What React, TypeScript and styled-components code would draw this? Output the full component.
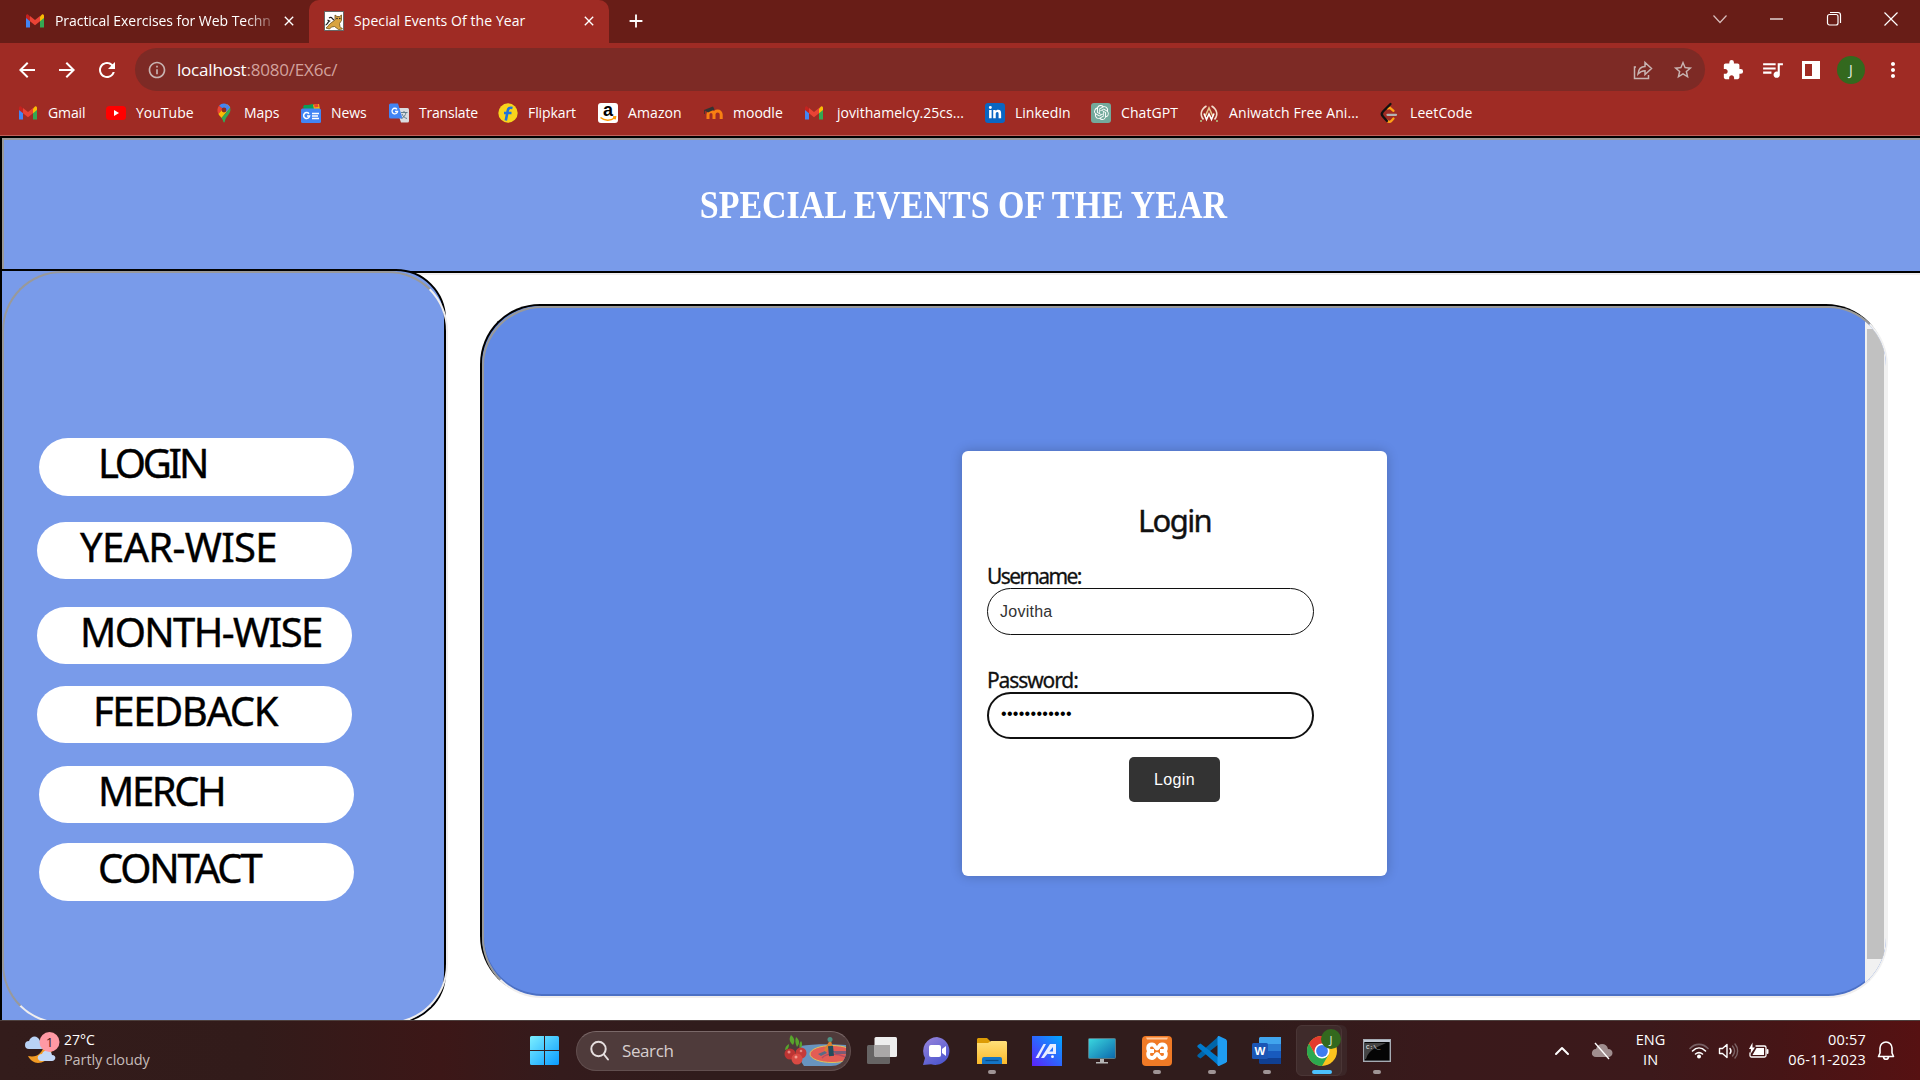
import React from "react";
import styled, { createGlobalStyle } from "styled-components";
import { MdExtension, MdQueueMusic, MdInfoOutline, MdStarBorder, MdMoreVert, MdArrowBack, MdArrowForward, MdRefresh, MdClose, MdAdd } from "react-icons/md";
import { SiOpenai } from "react-icons/si";
import { FaLinkedinIn } from "react-icons/fa";

const Global = createGlobalStyle`
  * { box-sizing: border-box; }
  body { margin: 0; background: #fff; overflow: hidden; }
`;

const ui = `"Open Sans", "Noto Sans", sans-serif`;
const body = `"Noto Sans", "Open Sans", sans-serif`;
const arial = `"Liberation Sans", Arial, sans-serif`;

const Screen = styled.div`
  width: 1920px;
  height: 1080px;
  display: flex;
  flex-direction: column;
  overflow: hidden;
  font-family: ${ui};
`;

/* ---------- browser chrome ---------- */

const TabStrip = styled.div`
  height: 43px;
  flex: none;
  background: #681d17;
  display: flex;
  align-items: stretch;
  color: #fff;
`;

const Tab = styled.div<{ $active?: boolean; $width: number; $inset: number }>`
  width: ${(p) => p.$width}px;
  padding: 0 12px 2px ${(p) => p.$inset}px;
  display: flex;
  align-items: center;
  background: ${(p) => (p.$active ? "#9f2b24" : "transparent")};
  border-radius: 10px 10px 0 0;
  font-size: 14px;
  svg { flex: none; }
`;

const TabTitle = styled.span<{ $gap: number; $spacing: number; $fade?: boolean }>`
  flex: 1;
  margin-left: ${(p) => p.$gap}px;
  overflow: hidden;
  white-space: nowrap;
  letter-spacing: ${(p) => p.$spacing}px;
  ${(p) => p.$fade && "mask-image: linear-gradient(90deg, #000 84%, transparent 100%);"}
`;

const NewTab = styled.div`
  display: flex;
  align-items: center;
  padding: 0 0 1px 16px;
`;

const WindowControls = styled.div`
  margin-left: auto;
  display: flex;
  height: 37px;
  align-items: center;
  padding-right: 17px;
  gap: 33px;
`;

const Toolbar = styled.div`
  height: 53px;
  flex: none;
  background: #9f2b24;
  display: flex;
  align-items: center;
  padding: 0 15px 0 15px;
  color: #fff;
`;

const NavButtons = styled.div`
  display: flex;
  gap: 16px;
  width: 120px;
`;

const Omnibox = styled.div`
  width: 1570px;
  height: 43px;
  border-radius: 22px;
  background: #7d2a25;
  display: flex;
  align-items: center;
  padding: 0 11px 0 12px;
  color: #c8b3b1;
`;

const Url = styled.span`
  flex: 1;
  margin-left: 10px;
  font-size: 17px;
  letter-spacing: -0.2px;
  color: #d3a29d;
  b { font-weight: 400; color: #fff; }
`;

const OmniActions = styled.div`
  display: flex;
  gap: 18px;
  align-items: center;
`;

const ToolActions = styled.div`
  display: flex;
  align-items: center;
  justify-content: space-between;
  flex: 1;
  margin: 0 0 0 17px;
`;

const Avatar = styled.div<{ $size: number; $font: number }>`
  width: ${(p) => p.$size}px;
  height: ${(p) => p.$size}px;
  border-radius: 50%;
  background: #33691e;
  color: #e6efe2;
  font-size: ${(p) => p.$font}px;
  display: flex;
  align-items: center;
  justify-content: center;
`;

const Bookmarks = styled.div`
  height: 40px;
  flex: none;
  background: #9f2b24;
  border-bottom: 1px solid #c0605a;
  display: flex;
  padding: 0 0 6px 18px;
  align-items: center;
  color: #fff;
  font-size: 14px;
`;

const Bookmark = styled.div<{ $width: number; $gap: number }>`
  width: ${(p) => p.$width}px;
  flex: none;
  display: flex;
  align-items: center;
  gap: ${(p) => p.$gap}px;
  white-space: nowrap;
  svg, i { flex: none; overflow: visible; }
`;

const BookmarkText = styled.span<{ $spacing: number }>`
  letter-spacing: ${(p) => p.$spacing}px;
`;

const Tile = styled.i<{ $bg: string; $color: string }>`
  width: 20px;
  height: 20px;
  border-radius: 3px;
  background: ${(p) => p.$bg};
  color: ${(p) => p.$color};
  display: flex;
  align-items: center;
  justify-content: center;
`;

/* ---------- web page ---------- */

const Page = styled.div`
  height: 884px;
  flex: none;
  overflow: hidden;
  background: #fff;
`;

const Banner = styled.header`
  height: 139px;
  background: #799bea;
  border: solid #000;
  border-width: 2px 0 0 2px;
  display: flex;
`;

const BannerInner = styled.div`
  flex: 1;
  border: 2px solid #999;
  border-right: 0;
  border-bottom-color: #f0eeee;
  display: flex;
  justify-content: center;
  background: #799bea;
  box-shadow: inset 0 -2px #000;
`;

const BannerTitle = styled.h1`
  margin: 0;
  padding: 41px 0 0 4px;
  font: 700 39px/48px "Liberation Serif", "Times New Roman", serif;
  color: #fff;
  white-space: nowrap;
  transform: scaleX(0.871);
`;

const Content = styled.div`
  display: flex;
  align-items: flex-start;
`;

const Sidebar = styled.nav`
  position: relative;
  width: 446px;
  height: 754px;
  flex: none;
  margin-top: -6px;
  background: #799bea;
  border: 2px solid #000;
  border-radius: 0 50px 50px 0;
  padding: 167px 0 0 35px;
  &::after {
    content: "";
    position: absolute;
    inset: 0 -4px -3px 0;
    border: 2px solid;
    border-color: #999 #f0eeee #f0eeee #999;
    border-radius: 60px;
  }
`;

const NavPill = styled.a<{ $h: number; $shift: number; $gap: number; $pad: number; $spacing: number }>`
  display: block;
  width: 315px;
  height: ${(p) => p.$h}px;
  margin: 0 0 ${(p) => p.$gap}px ${(p) => p.$shift}px;
  padding-left: ${(p) => p.$pad}px;
  border-radius: 29px;
  background: #fff;
  color: #000;
  font: 400 40px/49px ${body};
  letter-spacing: ${(p) => p.$spacing}px;
  -webkit-text-stroke: 0.4px #000;
  white-space: nowrap;
`;

const FrameOuter = styled.main`
  width: 1406px;
  height: 692px;
  margin: 29px 0 0 34px;
  flex: none;
  border: solid #000;
  border-width: 2px 0 0 2px;
  border-radius: 60px;
  background: #628ae6;
`;

const Frame = styled.div`
  width: 1406px;
  height: 692px;
  display: flex;
  border: 2px solid;
  border-color: #999 #f1f1f1 #f0eeee #999;
  border-radius: 60px;
  background: #628ae6;
  box-shadow: inset 0 -2px #4c70c4;
  overflow: hidden;
`;

const FrameBody = styled.div`
  flex: 1;
  padding: 143px 0 0 478px;
`;

const ScrollTrack = styled.div`
  width: 21px;
  background: #f1f1f1;
  padding: 21px 2px 0 2px;
`;

const ScrollThumb = styled.div`
  height: 630px;
  background: #c1c1c1;
`;

const Card = styled.form`
  width: 425px;
  height: 425px;
  border-radius: 6px;
  background: #fff;
  box-shadow: 0 0 12px rgba(0, 0, 0, 0.22);
  padding: 47px 25px 0;
  display: flex;
  flex-direction: column;
  color: #111;
`;

const CardTitle = styled.h2`
  margin: 0 0 23px;
  text-align: center;
  font: 400 31px/44px ${body};
  letter-spacing: -1.6px;
  -webkit-text-stroke: 0.4px #111;
`;

const FieldLabel = styled.label<{ $spacing: number }>`
  height: 23px;
  font: 400 21px/23px ${body};
  letter-spacing: ${(p) => p.$spacing}px;
  -webkit-text-stroke: 0.3px #111;
  color: #111;
`;

const Field = styled.div<{ $focus?: boolean; $gap: number }>`
  width: 327px;
  height: 47px;
  flex: none;
  margin-bottom: ${(p) => p.$gap}px;
  padding: 0 12px;
  border: ${(p) => (p.$focus ? 2 : 1)}px solid #101010;
  border-radius: 24px;
  font: 16px/45px ${arial};
  letter-spacing: 0.25px;
  color: #333;
`;

const Mask = styled.span`
  display: block;
  font: 16px/40px ${arial};
  letter-spacing: 0.3px;
  color: #000;
`;

const Submit = styled.button`
  width: 91px;
  height: 45px;
  align-self: center;
  border: 0;
  border-radius: 5px;
  background: #333;
  color: #fff;
  font: 16px ${arial};
  letter-spacing: 0.4px;
`;

/* ---------- taskbar ---------- */

const Taskbar = styled.footer`
  height: 60px;
  flex: none;
  border-top: 1px solid #4d403e;
  background: linear-gradient(90deg, #331c1b 0, #321b1a 250px, #3c1717 440px, #341b1c 560px, #301c1c 700px, #301c1c 1250px, #3a191b 1450px, #3c191b 1650px, #461516 1780px, #561112 1920px);
  display: flex;
  align-items: center;
  color: #fff;
`;

const Weather = styled.div`
  width: 530px;
  padding-left: 25px;
  display: flex;
  gap: 4px;
  font-size: 14px;
  line-height: 20px;
  color: #fff;
  div { margin-top: -1px; }
  small { display: block; font-size: 14.5px; color: #c5bbb9; letter-spacing: -0.1px; }
`;

const SearchBox = styled.div`
  width: 275px;
  height: 40px;
  margin: 0 3px 0 16px;
  border-radius: 20px;
  background: #4f3b3b;
  border: 1px solid #624f4f;
  border-top-color: #7a6868;
  display: flex;
  align-items: center;
  padding: 0 2px 0 12px;
  font-size: 17px;
  letter-spacing: -0.4px;
  color: #d8cfcf;
  span { flex: 1; padding-left: 11px; }
`;

const Apps = styled.div`
  display: flex;
  height: 100%;
`;

const AppSlot = styled.div<{ $active?: boolean }>`
  position: relative;
  width: 55px;
  display: flex;
  align-items: center;
  justify-content: center;
  &::before {
    content: "";
    display: ${(p) => (p.$active ? "block" : "none")};
    position: absolute;
    inset: 4px 7px 4px 2px;
    border-radius: 6px;
    border: 1px solid #4a3636;
    background: #3f2b2b;
    box-shadow: 5px 0 0 #3b2627;
  }
  svg { position: relative; }
`;

const Running = styled.i<{ $on?: boolean }>`
  position: absolute;
  bottom: 6px;
  width: ${(p) => (p.$on ? 20 : 8)}px;
  height: 4px;
  border-radius: 2px;
  background: ${(p) => (p.$on ? "#4cc2ff" : "#9f9495")};
`;

const AppBadge = styled.div`
  position: absolute;
  top: 8px;
  left: 27px;
`;

const Tray = styled.div`
  margin-left: auto;
  display: flex;
  align-items: center;
  padding-right: 25px;
  line-height: 20px;
`;

const Overflow = styled.div`
  display: flex;
  align-items: center;
  gap: 21px;
`;

const Lang = styled.div`
  text-align: center;
  margin: -1px 24px 0 23px;
  font-size: 14.5px;
`;

const Clock = styled.div`
  text-align: right;
  margin: -2px 11px 0 19px;
  font-size: 14.5px;
  letter-spacing: 0.2px;
`;

const TrayIcons = styled.div`
  display: flex;
  gap: 9px;
  align-items: center;
`;

/* ---------- drawings ---------- */

const GmailIcon = () => (
  <svg width="20" height="20" viewBox="0 0 20 20">
    <path d="M1 5v11.5h4V8z" fill="#4285f4" />
    <path d="M19 5v11.5h-4V8z" fill="#34a853" />
    <path d="M15 5.5 17 3.4c1.2-.6 2 .4 2 1.6V7l-4 3.2z" fill="#fbbc04" />
    <path d="M5 5.5 3 3.4C1.800 2.800 1 3.800 1 5v2l4 3.200z" fill="#c5221f" />
    <path d="m5 5 5 4 5-4v5.200l-5 4-5-4z" fill="#ea4335" />
  </svg>
);

const YouTubeIcon = () => (
  <svg width="20" height="20" viewBox="0 0 20 20">
    <rect y="3" width="20" height="14" rx="3.500" fill="#f00" />
    <path d="M8 7v6l5-3z" fill="#fff" />
  </svg>
);

const MapsIcon = () => (
  <svg width="20" height="20" viewBox="0 0 20 20">
    <path d="M10 .5c1 0 2 .2 3 .7L9 6 5 2.800A6.500 6.500 0 0 1 10 .5z" fill="#4285f4" />
    <path d="M5 2.800 9 6l-4.600 5C2.800 8 3.200 5 5 2.800z" fill="#ea4335" />
    <path d="M13 1.200c1.500.8 2.700 2.100 3.200 3.600L7.500 15c-1.200-1.700-2.300-2.600-3.100-4z" fill="#fbbc04" />
    <path d="M13 1.200c1.500.8 2.700 2.100 3.200 3.600L12 9 9 6z" fill="#4285f4" />
    <path d="M16.200 4.800c.9 3.200-.4 5.200-2.200 7.500-2 2.500-2.800 4-3.200 6.500-.2 1-1.200 1-1.500 0-.3-1.500-.9-2.700-1.800-3.900z" fill="#34a853" />
    <circle cx="10" cy="7" r="2.400" fill="#8e2b25" />
  </svg>
);

const NewsIcon = () => (
  <svg width="20" height="20" viewBox="0 0 20 20">
    <path d="M3 2h11v8H3z" fill="#0c9d58" />
    <path d="m9 2 9-1 1 6-8 2z" fill="#fbbc04" />
    <path d="m2 3 10-2 1 6H3z" fill="#0c9d58" />
    <path d="M13 1.500 17 1l.5 3-4 .5z" fill="#ea4335" />
    <rect y="5.500" width="20" height="14.500" rx="1.500" fill="#4285f4" />
    <path d="M8 10.700a3 3 0 1 0 .6 2.300H6" fill="none" stroke="#fff" strokeWidth="1.500" />
    <path d="M11 10.500h7M11 13h6M11 15.500h7" stroke="#fff" strokeWidth="1.400" />
  </svg>
);

const TranslateIcon = () => (
  <svg width="20" height="20" viewBox="0 0 20 20">
    <path d="M7 5h11.500A1.500 1.500 0 0 1 20 6.500V18a1.500 1.500 0 0 1-1.500 1.500H12z" fill="#dadce0" />
    <path d="M1.500 0.500H9l4.500 15h-12A1.500 1.500 0 0 1 0 14V2A1.500 1.500 0 0 1 1.500.5z" fill="#4285f4" />
    <path d="M8 6.300A2.800 2.800 0 1 0 8.600 8.500H6" fill="none" stroke="#fff" strokeWidth="1.300" />
    <path d="M12 9.500h6.500M15 8v1.500M17 9.500c-.5 3-2.500 5-4.500 6M13 11c1 2.500 3 4 5 4.500" fill="none" stroke="#607d8b" strokeWidth="1" />
  </svg>
);

const FlipkartIcon = () => (
  <svg width="20" height="20" viewBox="0 0 20 20">
    <circle cx="10" cy="10" r="9.700" fill="#f8d51c" />
    <path d="M14.500 5c-3-.8-4.300.3-4.800 2.800L7.800 17.500M6 10h7.500" fill="none" stroke="#1f74dc" strokeWidth="2.600" />
  </svg>
);

const AmazonIcon = () => (
  <svg width="20" height="20" viewBox="0 0 20 20">
    <rect width="20" height="20" rx="3" fill="#fff" />
    <text x="10" y="12.500" textAnchor="middle" fontFamily={arial} fontWeight="700" fontSize="18">a</text>
    <path d="M2.500 14.500c4 3.500 10 3.500 14 .5m-1.500-1 2.500-.2-.5 2.500" fill="none" stroke="#f90" strokeWidth="1.500" />
  </svg>
);

const MoodleIcon = () => (
  <svg width="20" height="20" viewBox="0 0 20 20">
    <path d="M5 16V11.500a2.900 2.900 0 0 1 6 0V16m0-4.500a3.600 3.600 0 0 1 7.200 0V16" fill="none" stroke="#f98012" strokeWidth="3" />
    <path d="M1 7 10 3.500l1.500 3L5 9.500z" fill="#333" />
    <path d="M1.500 7v4" stroke="#333" strokeWidth=".8" />
  </svg>
);

const AniwatchIcon = () => (
  <svg width="20" height="20" viewBox="0 0 20 20" fill="none" strokeWidth="1.600">
    <path d="M7.500 3C2 6 .5 12 4.500 16.500M12.500 3c5.500 3 7 9 3 13.500" stroke="#f4dccb" />
    <path d="M6 13.500 10 5l4 8.500" stroke="#e8c48b" />
    <path d="m5 10.500 2.500 6 2.500-5.500 2.500 5.500 2.500-6" stroke="#fff" />
    <path d="M1 18h2M17 18h2" stroke="#b3cf8a" />
  </svg>
);

const LeetCodeIcon = () => (
  <svg width="20" height="20" viewBox="0 0 20 20" fill="none" strokeLinecap="round" strokeWidth="2.300">
    <path d="m14.500 15.500-2 2.200c-1.300 1.500-3 1.500-4.300 0" stroke="#ffa116" />
    <path d="m9 5.500 2-.7 3.500 3" stroke="#ffa116" />
    <path d="M11.500 1 4 8.500c-1.500 1.500-1.500 3.500 0 5l4 4.500" stroke="#111" />
    <path d="M8.500 11.800H17" stroke="#b3b3b3" />
  </svg>
);

const TomcatIcon = () => (
  <svg width="20" height="20" viewBox="0 0 20 20">
    <rect x=".5" y=".5" width="19" height="19" fill="#fff" stroke="#666" />
    <path d="M2 17c2-1 3-4 5-5l4-3 0-5 2 1.500h2.500l2-1.500v5.500l-2 3 .5 3 2.500 2.500-4 .5-4-3-3 .5-2 2z" fill="#d9a441" stroke="#6d521b" strokeWidth=".8" />
    <path d="M5 7c3-2 3 1 5 2M1.500 14c2 0 2-3 4-4l-2-1" fill="none" stroke="#222" strokeWidth="1.200" />
    <circle cx="13" cy="7.500" r=".8" fill="#222" /><circle cx="15.800" cy="7.500" r=".8" fill="#222" />
  </svg>
);

const ShareIcon = () => (
  <svg width="22" height="22" viewBox="0 0 22 22" fill="none" stroke="#c8b3b1" strokeWidth="1.500">
    <path d="M4 8H2.500v11.500H16.500V16M6 15c.5-5 3-7.500 7-7.500V3.500l6.500 6-6.500 6v-3.800c-3 0-5 1-7 3.300z" />
  </svg>
);

const SidePanelIcon = () => (
  <svg width="20" height="20" viewBox="0 0 20 20">
    <path d="M1 1h18v18H1zM4 4v12h7V4z" fill="#fff" fillRule="evenodd" />
  </svg>
);

const WindowIcon = ({ kind }: { kind: "chevron" | "min" | "restore" | "close" }) => (
  <svg width="24" height="20" viewBox="0 0 24 20" fill="none" stroke="#fff" strokeWidth="1.200">
    {kind === "chevron" && <path d="m5.500 6.500 6.500 7 6.500-7" stroke="#d8bebc" />}
    {kind === "min" && <path d="M5 10h13" />}
    {kind === "restore" && (<><rect x="5.500" y="5.500" width="10.500" height="10.500" rx="2" /><path d="M8 3.500h8a2.500 2.500 0 0 1 2.500 2.500v8" /></>)}
    {kind === "close" && <path d="m5.500 3.500 13 13m0-13-13 13" />}
  </svg>
);

const WeatherIcon = () => (
  <svg width="35" height="36" viewBox="0 0 35 36">
    <path d="M27 8c3 12-4 24-14 24-4 0-8-3-10-7 8 2 15-2 16-12z" fill="#f29b24" />
    <path d="M4 18a4 4 0 0 1 0-8c2-6 9-6 11 0 5 0 6 8 1 8z" fill="#b9d2f5" />
    <path d="M16 30c-5-1-4-7 1-7 2-5 9-5 10 1 5 0 4 6 0 6z" fill="#c3d8f8" />
    <circle cx="24.500" cy="11" r="10" fill="#ff99a4" />
    <text x="24.500" y="16" textAnchor="middle" fontFamily={ui} fontSize="13.500" fill="#3a1a1e">1</text>
  </svg>
);

const StartIcon = () => (
  <svg width="30" height="30" viewBox="0 0 30 30">
    <defs>
      <linearGradient id="start" x1="0" y1="0" x2="1" y2="1"><stop stopColor="#7cefff" /><stop offset="1" stopColor="#0a9bff" /></linearGradient>
    </defs>
    <path d="M1.500 0H14v14H0V1.500A1.500 1.500 0 0 1 1.500 0zM15 0h12.500A1.500 1.500 0 0 1 29 1.500V14H15zM0 15h14v14H1.500A1.500 1.500 0 0 1 0 27.500zM15 15h14v12.500a1.500 1.500 0 0 1-1.500 1.500H15z" fill="url(#start)" />
  </svg>
);

const SearchIcon = () => (
  <svg width="22" height="22" viewBox="0 0 22 22" fill="none" stroke="#e6dfdf" strokeWidth="2" strokeLinecap="round">
    <circle cx="9.500" cy="9" r="7.200" /><path d="m15 14.500 4 5" />
  </svg>
);

const SearchArt = () => (
  <svg width="64" height="34" viewBox="0 0 64 34">
    <defs>
      <clipPath id="court"><path d="M16 12c12-2 32-2 46-1v9c-2 9-8 12-15 12H20c-4-5-6-12-4-20z" /></clipPath>
    </defs>
    <g clipPath="url(#court)">
      <path d="M10 8h54v26H10z" fill="#6894bf" />
      <ellipse cx="48" cy="20" rx="22" ry="8.500" fill="#e35d55" stroke="#e2c058" />
      <path d="M38 24c4-5 14-5 24-1" fill="none" stroke="#b54b62" strokeWidth="1.500" />
      <path d="M48 17h16v3H52z" fill="#4b5b84" opacity=".7" />
    </g>
    <path d="m34 20 7-3 2 2-6 3z" fill="#5b6b84" />
    <path d="m41 17 5-8 2 6" stroke="#d9812f" strokeWidth="3" fill="none" />
    <path d="m46.500 12 1 10" stroke="#234c5c" strokeWidth="5" />
    <circle cx="46" cy="5.500" r="2.500" fill="#4d9184" />
    <path d="M7 1c4 3 4 7 2 10C5 8 5 4 7 1zM12 3c4 3 4 7 1 10-2-4-2-7-1-10zM17 7c2 3 1 6-1 8-1-3-1-6 1-8zM5 10c-2 1-4 3-4 6 3 0 4-3 4-6z" fill="#58a52c" />
    <circle cx="6" cy="20" r="5.500" fill="#bd3433" /><circle cx="17" cy="19" r="5.500" fill="#c53b38" /><circle cx="13" cy="25" r="5.500" fill="#d94a43" />
    <circle cx="5" cy="18" r="1.500" fill="#e98880" /><circle cx="12" cy="23" r="1.500" fill="#f29b90" /><circle cx="17" cy="17" r="1.300" fill="#e98880" />
  </svg>
);

const TaskViewIcon = () => (
  <svg width="30" height="30" viewBox="0 0 30 30">
    <rect y="9" width="23" height="19" rx="1.500" fill="#666464" />
    <rect x="7.500" y="1" width="22.500" height="20" rx="1.500" fill="#eee" />
    <path d="M7.500 9H23v12H9a1.500 1.500 0 0 1-1.500-1.500z" fill="#aaa8a8" />
  </svg>
);

const ChatIcon = () => (
  <svg width="30" height="30" viewBox="0 0 30 30">
    <defs><linearGradient id="chat" x1="0" y1="0" x2=".6" y2="1"><stop stopColor="#9a86dc" /><stop offset="1" stopColor="#4f58cf" /></linearGradient></defs>
    <path d="M15 1a14 14 0 1 1-6 27.200L1 29l2-7A14 14 0 0 1 15 1z" fill="url(#chat)" />
    <rect x="7" y="9" width="12" height="12" rx="2" fill="#fff" /><path d="m20 13 4-3v10l-4-3z" fill="#fff" />
  </svg>
);

const FolderIcon = () => (
  <svg width="30" height="28" viewBox="0 0 30 28">
    <defs><linearGradient id="folder" x1="0" y1="0" x2="0" y2="1"><stop stopColor="#ffe07a" /><stop offset="1" stopColor="#fbb92a" /></linearGradient></defs>
    <path d="M1 1h9l3 3v6H0V2z" fill="#dc9b05" />
    <path d="M0 6h11l3-2h15l1 1v22H0z" fill="url(#folder)" />
    <path d="M5 27v-5a2 2 0 0 1 2-2h16a2 2 0 0 1 2 2v5z" fill="#1475c6" /><path d="M8.500 23.500h13" stroke="#0a4b86" strokeWidth="1.200" />
  </svg>
);

const AsusIcon = () => (
  <svg width="30" height="30" viewBox="0 0 30 30">
    <defs><linearGradient id="asus" x1="0" y1="1" x2="1" y2="0"><stop stopColor="#5b22fa" /><stop offset="1" stopColor="#00a8ff" /></linearGradient></defs>
    <rect width="30" height="30" fill="url(#asus)" />
    <path d="M3.500 22 11.500 8H14L6.500 22zM9 22 18 8h6v10h-3v-7L12 22zM17 15.500h4V18h-5.500z" fill="#e8edff" /><circle cx="20.500" cy="20.700" r="1.400" fill="#fff" />
  </svg>
);

const MonitorIcon = () => (
  <svg width="28" height="26" viewBox="0 0 28 26">
    <defs><linearGradient id="mon" x1="0" y1="0" x2="1" y2="1"><stop stopColor="#3ad8df" /><stop offset="1" stopColor="#0c67ac" /></linearGradient></defs>
    <rect x=".5" y=".5" width="27" height="20" rx="1" fill="url(#mon)" stroke="#5b7880" />
    <path d="M12 21h4v3h4v1.500H8V24h4z" fill="#b5b5b5" />
  </svg>
);

const XamppIcon = () => (
  <svg width="30" height="30" viewBox="0 0 30 30">
    <rect width="30" height="30" rx="4" fill="#f07a26" /><path d="M4 1.500h22l-1 2H5z" fill="#ffc79c" />
    <path d="M10 8.500c-5 0-4.500 5.500-2 6.500-2.500 1-3 7 2 7 3.500 0 3-4 5-4s1.500 4 5 4c5 0 4.500-6 2-7 2.500-1 3-6.500-2-6.500-3.500 0-3 4-5 4s-1.500-4-5-4zM8 15h4m6 0h4" fill="none" stroke="#fff" strokeWidth="3.800" strokeLinejoin="round" />
  </svg>
);

const CodeIcon = () => (
  <svg width="30" height="30" viewBox="0 0 30 30">
    <path d="M22 8 3.500 22.500 1 21c-1-1-.8-1.800 0-2.500L22 0z" fill="#0065a9" />
    <path d="M22 22 3.500 7.500 1 9c-1 1-.8 1.800 0 2.500L22 30z" fill="#007acc" />
    <path d="m22 0 7 3.300 1 1.500v20.400l-1 1.500-7 3.300c-1 .2-1.500-.5-1.500-1.500v-27c0-1 .5-1.700 1.500-1.500z" fill="#1f9cf0" />
  </svg>
);

const WordIcon = () => (
  <svg width="30" height="28" viewBox="0 0 30 28">
    <path d="M8 0h21v7H7V1z" fill="#41a5ee" /><path d="M7 7h22v7H7z" fill="#2b7cd3" /><path d="M7 14h22v7H7z" fill="#185abd" /><path d="M7 21h22v6H8l-1-1z" fill="#103f91" />
    <rect y="6" width="16" height="16" rx="1.500" fill="#1b56b5" />
    <text x="8" y="18" textAnchor="middle" fontFamily={arial} fontWeight="700" fontSize="11.500" fill="#fff">W</text>
  </svg>
);

const ChromeIcon = () => (
  <svg width="30" height="30" viewBox="0 0 30 30">
    <circle cx="15" cy="15" r="15" fill="#fcc31e" />
    <path d="M2 7.500A15 15 0 0 0 15 30l6.500-11.300H8.500z" fill="#2da94f" />
    <path d="M2 7.500A15 15 0 0 1 28 7.500H15l-6.500 11.200z" fill="#e33b2e" />
    <circle cx="15" cy="15" r="7.500" fill="#fff" /><circle cx="15" cy="15" r="5.900" fill="#3f7cf0" />
  </svg>
);

const TerminalIcon = () => (
  <svg width="28" height="24" viewBox="0 0 28 24">
    <rect x=".7" y=".7" width="26.600" height="21.600" fill="#050505" stroke="#a5abb3" strokeWidth="1.400" />
    <path d="M1 1h26v2H1z" fill="#c1c8d2" /><path d="M2 4h21C15 8 6 10 3 20H2z" fill="#444" />
    <text x="3" y="9.500" fontFamily="'Liberation Mono', monospace" fontSize="6" fill="#fff">C:\_</text>
  </svg>
);

const tray = { fill: "none", stroke: "#fff", strokeWidth: 1.6, strokeLinecap: "round" as const, strokeLinejoin: "round" as const };
const UpIcon = () => <svg width="16" height="12" viewBox="0 0 16 12" {...tray} strokeWidth="2"><path d="m2 9 6-6 6 6" /></svg>;
const CloudOffIcon = () => (
  <svg width="22" height="20" viewBox="0 0 22 20">
    <path d="M5 16c-6 0-5-8 0-8 2-7 11-6 12 0 6 0 6 8 0 8z" fill="#a08e8f" /><path d="m4 2 14 16" stroke="#fff" strokeWidth="1.400" />
  </svg>
);
const WifiIcon = () => (
  <svg width="20" height="18" viewBox="0 0 20 18" {...tray}>
    <path d="M1 6.500c5-5.500 13-5.500 18 0" stroke="#776064" /><path d="M3.500 9c4-4 9-4 13 0M6.500 12c2.500-2 4.500-2 7 0" /><circle cx="10" cy="14.500" r="1.200" fill="#fff" />
  </svg>
);
const SpeakerIcon = () => (
  <svg width="21" height="18" viewBox="0 0 21 18" {...tray} strokeWidth="1.400">
    <path d="M1.500 6.500H4.500L9 2.500v13l-4.500-4h-3zM12 6.500c1.200 1.500 1.200 3.500 0 5" /><path d="M14.500 4c2.500 3 2.500 7 0 10M17 2c3.500 4 3.500 10 0 14" stroke="#7b6365" />
  </svg>
);
const BatteryIcon = () => (
  <svg width="21" height="18" viewBox="0 0 21 18" {...tray} strokeWidth="1.300">
    <path d="M8 4h8.500a1.500 1.500 0 0 1 1.500 1.500v8a1.500 1.500 0 0 1-1.500 1.500h-13A1.500 1.500 0 0 1 2 13.500V11" /><path d="M8.500 6H16v7H4.500z" fill="#fff" stroke="none" /><path d="M19.500 8v3" strokeWidth="2" /><path d="M4.500 0.500 1 7h2l-.5 5L7 5.500H4.500z" fill="#fff" stroke="none" />
  </svg>
);
const BellIcon = () => (
  <svg width="18" height="22" viewBox="0 0 18 22" {...tray}>
    <path d="M9 2a6 6 0 0 0-6 6v5l-1.500 3.500h15L15 13V8a6 6 0 0 0-6-6zM6.500 17c.5 3 4.500 3 5 0" />
  </svg>
);

/* ---------- data ---------- */

const bookmarks: { label: string; icon: React.ReactNode; width: number; spacing?: number; gap?: number }[] = [
  { label: "Gmail", icon: <GmailIcon />, width: 88 },
  { label: "YouTube", icon: <YouTubeIcon />, width: 108, spacing: 0 },
  { label: "Maps", icon: <MapsIcon />, width: 87 },
  { label: "News", icon: <NewsIcon />, width: 88 },
  { label: "Translate", icon: <TranslateIcon />, width: 109, spacing: -0.2 },
  { label: "Flipkart", icon: <FlipkartIcon />, width: 100 },
  { label: "Amazon", icon: <AmazonIcon />, width: 105, spacing: 0.1 },
  { label: "moodle", icon: <MoodleIcon />, width: 101, spacing: 0 },
  { label: "jovithamelcy.25cs...", icon: <GmailIcon />, width: 181, spacing: 0.05, gap: 13 },
  { label: "LinkedIn", icon: <Tile $bg="#0a66c2" $color="#fff"><FaLinkedinIn size={14} /></Tile>, width: 106, spacing: 0 },
  { label: "ChatGPT", icon: <Tile $bg="#74aa9c" $color="#fff"><SiOpenai size={15} /></Tile>, width: 108, spacing: 0.1 },
  { label: "Aniwatch Free Ani...", icon: <AniwatchIcon />, width: 180, spacing: 0.1 },
  { label: "LeetCode", icon: <LeetCodeIcon />, width: 110, spacing: 0.1, gap: 11 },
];

const navItems = [
  { label: "LOGIN", h: 58, shift: 2, gap: 26, pad: 59, spacing: -3.3 },
  { label: "YEAR-WISE", h: 57, shift: 0, gap: 28, pad: 43, spacing: -0.7 },
  { label: "MONTH-WISE", h: 57, shift: 0, gap: 22, pad: 43, spacing: -1.6 },
  { label: "FEEDBACK", h: 57, shift: 0, gap: 23, pad: 56, spacing: -1.4 },
  { label: "MERCH", h: 57, shift: 2, gap: 20, pad: 59, spacing: -2.4 },
  { label: "CONTACT", h: 58, shift: 2, gap: 0, pad: 59, spacing: -2.2 },
];

const apps: { name: string; icon: React.ReactNode; run?: boolean; active?: boolean }[] = [
  { name: "taskview", icon: <TaskViewIcon /> },
  { name: "chat", icon: <ChatIcon /> },
  { name: "files", icon: <FolderIcon />, run: true },
  { name: "asus", icon: <AsusIcon /> },
  { name: "monitor", icon: <MonitorIcon /> },
  { name: "xampp", icon: <XamppIcon />, run: true },
  { name: "code", icon: <CodeIcon />, run: true },
  { name: "word", icon: <WordIcon />, run: true },
  { name: "chrome", icon: <ChromeIcon />, run: true, active: true },
  { name: "terminal", icon: <TerminalIcon />, run: true },
];

export default function App() {
  return (
    <Screen>
      <Global />
      <TabStrip>
        <Tab $width={309} $inset={25}>
          <GmailIcon />
          <TabTitle $gap={10} $spacing={-0.05} $fade>Practical Exercises for Web Techn</TabTitle>
          <MdClose size={16} />
        </Tab>
        <Tab $active $width={300} $inset={15}>
          <TomcatIcon />
          <TabTitle $gap={10} $spacing={0.08}>Special Events Of the Year</TabTitle>
          <MdClose size={16} />
        </Tab>
        <NewTab><MdAdd size={22} /></NewTab>
        <WindowControls>
          <WindowIcon kind="chevron" />
          <WindowIcon kind="min" />
          <WindowIcon kind="restore" />
          <WindowIcon kind="close" />
        </WindowControls>
      </TabStrip>
      <Toolbar>
        <NavButtons>
          <MdArrowBack size={24} /><MdArrowForward size={24} /><MdRefresh size={24} />
        </NavButtons>
        <Omnibox>
          <MdInfoOutline size={20} />
          <Url><b>localhost</b>:8080/EX6c/</Url>
          <OmniActions><ShareIcon /><MdStarBorder size={22} /></OmniActions>
        </Omnibox>
        <ToolActions>
          <MdExtension size={22} />
          <MdQueueMusic size={25} />
          <SidePanelIcon />
          <Avatar $size={28} $font={14}>J</Avatar>
          <MdMoreVert size={24} />
        </ToolActions>
      </Toolbar>
      <Bookmarks>
        {bookmarks.map((b) => (
          <Bookmark key={b.label} $width={b.width} $gap={b.gap ?? 10}>
            {b.icon}
            <BookmarkText $spacing={b.spacing ?? -0.1}>{b.label}</BookmarkText>
          </Bookmark>
        ))}
      </Bookmarks>

      <Page>
        <Banner>
          <BannerInner><BannerTitle>SPECIAL EVENTS OF THE YEAR</BannerTitle></BannerInner>
        </Banner>
        <Content>
          <Sidebar>
            {navItems.map((n) => (
              <NavPill key={n.label} $h={n.h} $shift={n.shift} $gap={n.gap} $pad={n.pad} $spacing={n.spacing}>{n.label}</NavPill>
            ))}
          </Sidebar>
          <FrameOuter>
            <Frame>
              <FrameBody>
                <Card>
                  <CardTitle>Login</CardTitle>
                  <FieldLabel $spacing={-1.55}>Username:</FieldLabel>
                  <Field $gap={34}>Jovitha</Field>
                  <FieldLabel $spacing={-1.1}>Password:</FieldLabel>
                  <Field $focus $gap={18}><Mask>••••••••••••</Mask></Field>
                  <Submit type="button">Login</Submit>
                </Card>
              </FrameBody>
              <ScrollTrack><ScrollThumb /></ScrollTrack>
            </Frame>
          </FrameOuter>
        </Content>
      </Page>

      <Taskbar>
        <Weather><WeatherIcon /><div>27°C<small>Partly cloudy</small></div></Weather>
        <StartIcon />
        <SearchBox><SearchIcon /><span>Search</span><SearchArt /></SearchBox>
        <Apps>
          {apps.map((a) => (
            <AppSlot key={a.name} $active={a.active}>
              {a.icon}
              {a.active && <AppBadge><Avatar $size={20} $font={11}>J</Avatar></AppBadge>}
              {a.run && <Running $on={a.active} />}
            </AppSlot>
          ))}
        </Apps>
        <Tray>
          <Overflow><UpIcon /><CloudOffIcon /></Overflow>
          <Lang>ENG<br />IN</Lang>
          <TrayIcons><WifiIcon /><SpeakerIcon /><BatteryIcon /></TrayIcons>
          <Clock>00:57<br />06-11-2023</Clock>
          <BellIcon />
        </Tray>
      </Taskbar>
    </Screen>
  );
}
